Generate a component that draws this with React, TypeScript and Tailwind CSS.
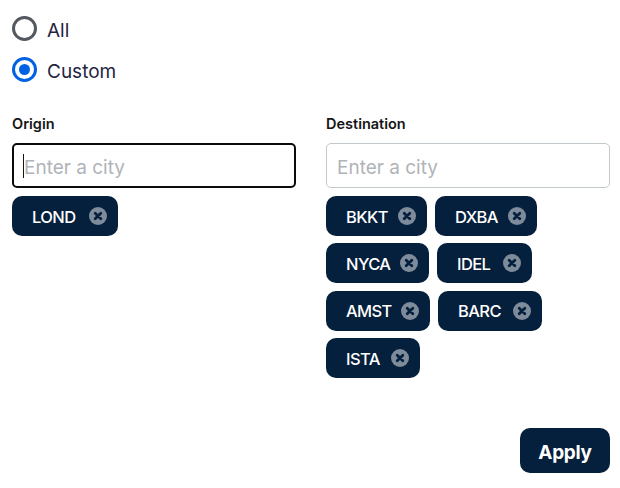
import { useState } from 'react';

type ChipItem = { code: string; width: string };

const ORIGINS: ChipItem[] = [{ code: 'LOND', width: 'w-[106px]' }];
const DESTINATIONS: ChipItem[] = [
  { code: 'BKKT', width: 'w-[101px]' },
  { code: 'DXBA', width: 'w-[102px]' },
  { code: 'NYCA', width: 'w-[103px]' },
  { code: 'IDEL', width: 'w-[95px]' },
  { code: 'AMST', width: 'w-[104px]' },
  { code: 'BARC', width: 'w-[104px]' },
  { code: 'ISTA', width: 'w-[94px]' },
];

function Radio({ label, checked }: { label: string; checked?: boolean }) {
  return (
    <label className="flex h-[25px] items-center gap-[10px]">
      <span
        className={
          checked
            ? 'flex size-[25px] items-center justify-center rounded-full border-[3px] border-[#0062e3]'
            : 'flex size-[25px] items-center justify-center rounded-full border-[3px] border-[#545860]'
        }
      >
        {checked && <span className="size-[11px] rounded-full bg-[#0062e3]" />}
      </span>
      <span className="pt-1 text-[19px] leading-[25px] text-[#24243f]">{label}</span>
    </label>
  );
}

function Chip({ code, width }: ChipItem) {
  return (
    <div className={`flex h-10 items-center rounded-[10px] bg-[#05203c] pl-5 pr-[11px] text-[16.5px] font-medium tracking-[-0.6px] text-white ${width}`}>
      <span className="pt-[2px]">{code}</span>
      <svg viewBox="0 0 18 18" className="ml-auto size-[18px]">
        <circle cx="9" cy="9" r="9" fill="#7e8b9b" />
        <path d="M6.2 6.2l5.6 5.6M11.8 6.2l-5.6 5.6" stroke="#05203c" strokeWidth="2.8" strokeLinecap="round" />
      </svg>
    </div>
  );
}

function CityField({ label, chips, focused }: { label: string; chips: ChipItem[]; focused?: boolean }) {
  const [value, setValue] = useState('');
  return (
    <div className="flex flex-col">
      <div className="mb-[9px] text-[14.5px] leading-[20px] font-semibold text-[#161616]">{label}</div>
      <div
        className={
          focused
            ? 'flex h-[45px] items-center rounded-[5px] border-2 border-[#0b0b0b] px-[9px]'
            : 'flex h-[45px] items-center rounded-[5px] border border-[#c2c9cd] px-[10px]'
        }
      >
        {focused && <span className="h-6 w-px shrink-0 bg-[#161616]" />}
        <input
          value={value}
          onChange={(e) => setValue(e.target.value)}
          placeholder="Enter a city"
          className="w-full bg-transparent pt-[6px] text-[19px] text-[#161616] outline-none placeholder:text-[#b0b3b8]"
        />
      </div>
      <div className="mt-2 flex flex-wrap gap-x-2 gap-y-[7.4px]">
        {chips.map((chip) => (
          <Chip key={chip.code} {...chip} />
        ))}
      </div>
    </div>
  );
}

export default function App() {
  return (
    <div className="flex h-[488px] w-[620px] flex-col bg-white px-[10px] pt-4 pb-[15px] font-['Inter',sans-serif]">
      <div className="flex flex-col gap-4 pl-[2px]">
        <Radio label="All" />
        <Radio label="Custom" checked />
      </div>
      <div className="mt-[32px] grid grid-cols-[284px_284px] gap-x-[30px] pl-[2px]">
        <CityField label="Origin" chips={ORIGINS} focused />
        <CityField label="Destination" chips={DESTINATIONS} />
      </div>
      <div className="mt-auto flex justify-end">
        <button className="h-[45px] w-[90px] rounded-[10px] bg-[#05203c] pt-[6px] text-[19px] font-bold tracking-[-0.3px] text-white">
          Apply
        </button>
      </div>
    </div>
  );
}
